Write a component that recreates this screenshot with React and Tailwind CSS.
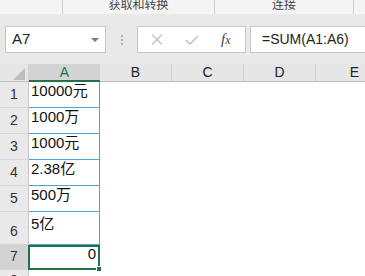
import React from "react";

const font = { fontFamily: '"Liberation Sans", "Noto Sans CJK SC", sans-serif' };

const rows = [
  { n: "1", v: "10000元", h: "h-[26px]", pb: "pb-[5px]" },
  { n: "2", v: "1000万", h: "h-[26px]", pb: "pb-[5px]" },
  { n: "3", v: "1000元", h: "h-[26px]", pb: "pb-[5px]" },
  { n: "4", v: "2.38亿", h: "h-[26px]", pb: "pb-[5px]" },
  { n: "5", v: "500万", h: "h-[26px]", pb: "pb-[5px]" },
  { n: "6", v: "5亿", h: "h-[33px]", pb: "pb-[9px]" },
];

function RowHead({ n, selected }) {
  return (
    <div
      className={`w-[29px] shrink-0 flex items-end justify-center pb-[2px] text-[14px] text-[#333] border-b border-[#d6d6d6] border-r border-r-[#c6c6c6] ${
        selected ? "bg-[#d3d3d3]" : "bg-[#e9e9e9]"
      }`}
    >
      {n}
    </div>
  );
}

export default function App() {
  return (
    <div className="w-[365px] h-[276px] overflow-hidden bg-white" style={font}>
      {/* ribbon group labels */}
      <div className="h-[14px] bg-[#f4f4f4] flex text-[12px] text-[#444] leading-none overflow-hidden">
        <div className="w-[63px] border-r border-[#cfcfcf]" />
        <div className="w-[152px] border-r border-[#cfcfcf] flex items-end justify-center pb-[3px]">
          获取和转换
        </div>
        <div className="w-[139px] border-r border-[#cfcfcf] flex items-end justify-center pb-[3px]">
          连接
        </div>
        <div className="flex-1" />
      </div>

      {/* formula bar */}
      <div className="h-[50px] bg-[#e9e9e9] flex pt-[12px]">
        <div className="ml-[5px] w-[101px] h-[27px] bg-white border border-[#c6c6c6] flex items-center pl-[6px] pr-[6px] text-[15px] text-[#222]">
          <span className="flex-1">A7</span>
          <span className="w-0 h-0 border-l-[4px] border-r-[4px] border-t-[4px] border-l-transparent border-r-transparent border-t-[#7a7a7a]" />
        </div>
        <div className="w-[31px] h-[27px] flex flex-col items-center justify-center gap-[2px]">
          <span className="w-[2px] h-[2px] bg-[#b0b0b0]" />
          <span className="w-[2px] h-[2px] bg-[#b0b0b0]" />
          <span className="w-[2px] h-[2px] bg-[#b0b0b0]" />
        </div>
        <div className="w-[109px] h-[27px] bg-white border border-[#c6c6c6] flex items-center">
          <svg className="ml-[13px]" width="12" height="11" viewBox="0 0 12 11">
            <path d="M1 0.5 L11 10.5 M11 0.5 L1 10.5" stroke="#c2c2c2" strokeWidth="1.4" fill="none" />
          </svg>
          <svg className="ml-[22px]" width="14" height="10" viewBox="0 0 14 10">
            <path d="M1 5 L5 9 L13 1" stroke="#c2c2c2" strokeWidth="1.6" fill="none" />
          </svg>
          <span
            className="ml-[22px] text-[15px] italic text-[#444] leading-none"
            style={{ fontFamily: '"Liberation Serif", serif' }}
          >
            f<span className="text-[12px]">x</span>
          </span>
        </div>
        <div className="ml-[4px] flex-1 h-[27px] bg-white border border-[#c6c6c6] border-r-0 flex items-center pl-[11px] text-[14px] text-[#222]">
          =SUM(A1:A6)
        </div>
      </div>

      {/* column headers */}
      <div className="h-[18px] flex text-[14px] text-[#222] bg-[#e6e6e6] border-b border-[#bdbdbd]">
        <div className="w-[29px] border-r border-[#cfcfcf] flex items-end justify-end pr-[3px] pb-[1px]">
          <svg width="12" height="12" viewBox="0 0 12 12">
            <path d="M12 0 L12 12 L0 12 Z" fill="#bdbdbd" />
          </svg>
        </div>
        <div className="w-[71px] bg-[#d3d3d3] border-b-2 border-[#217346] -mb-px flex items-center justify-center text-[#217346]">
          A
        </div>
        <div className="w-[72px] border-r border-[#cfcfcf] flex items-center justify-center">B</div>
        <div className="w-[72px] border-r border-[#cfcfcf] flex items-center justify-center">C</div>
        <div className="w-[72px] border-r border-[#cfcfcf] flex items-center justify-center">D</div>
        <div className="flex-1 flex items-center justify-center pl-[28px]">E</div>
      </div>

      {/* rows */}
      {rows.map((r) => (
        <div key={r.n} className={`${r.h} flex`}>
          <RowHead n={r.n} />
          <div
            className={`w-[71px] flex items-end ${r.pb} pl-[2px] text-[15px] text-[#111] border-r border-b border-[#45a7d4]`}
          >
            {r.v}
          </div>
          <div className="flex-1" />
        </div>
      ))}

      <div className="h-[25px] flex">
        <RowHead n="7" selected />
        <div className="relative w-[72px] -ml-px border-2 border-[#217346] flex items-end justify-end pr-[2px] pb-[3px] text-[15px] text-[#111]">
          0
          <span className="absolute -right-[4px] -bottom-[4px] w-[6px] h-[6px] bg-[#217346] border border-white" />
        </div>
        <div className="flex-1" />
      </div>

      <div className="h-[6px] flex overflow-hidden">
        <div className="w-[29px] shrink-0 flex items-start justify-center pt-[3px] text-[14px] leading-none text-[#333] bg-[#e9e9e9] border-r border-[#c6c6c6]">
          8
        </div>
        <div className="flex-1" />
      </div>
    </div>
  );
}
